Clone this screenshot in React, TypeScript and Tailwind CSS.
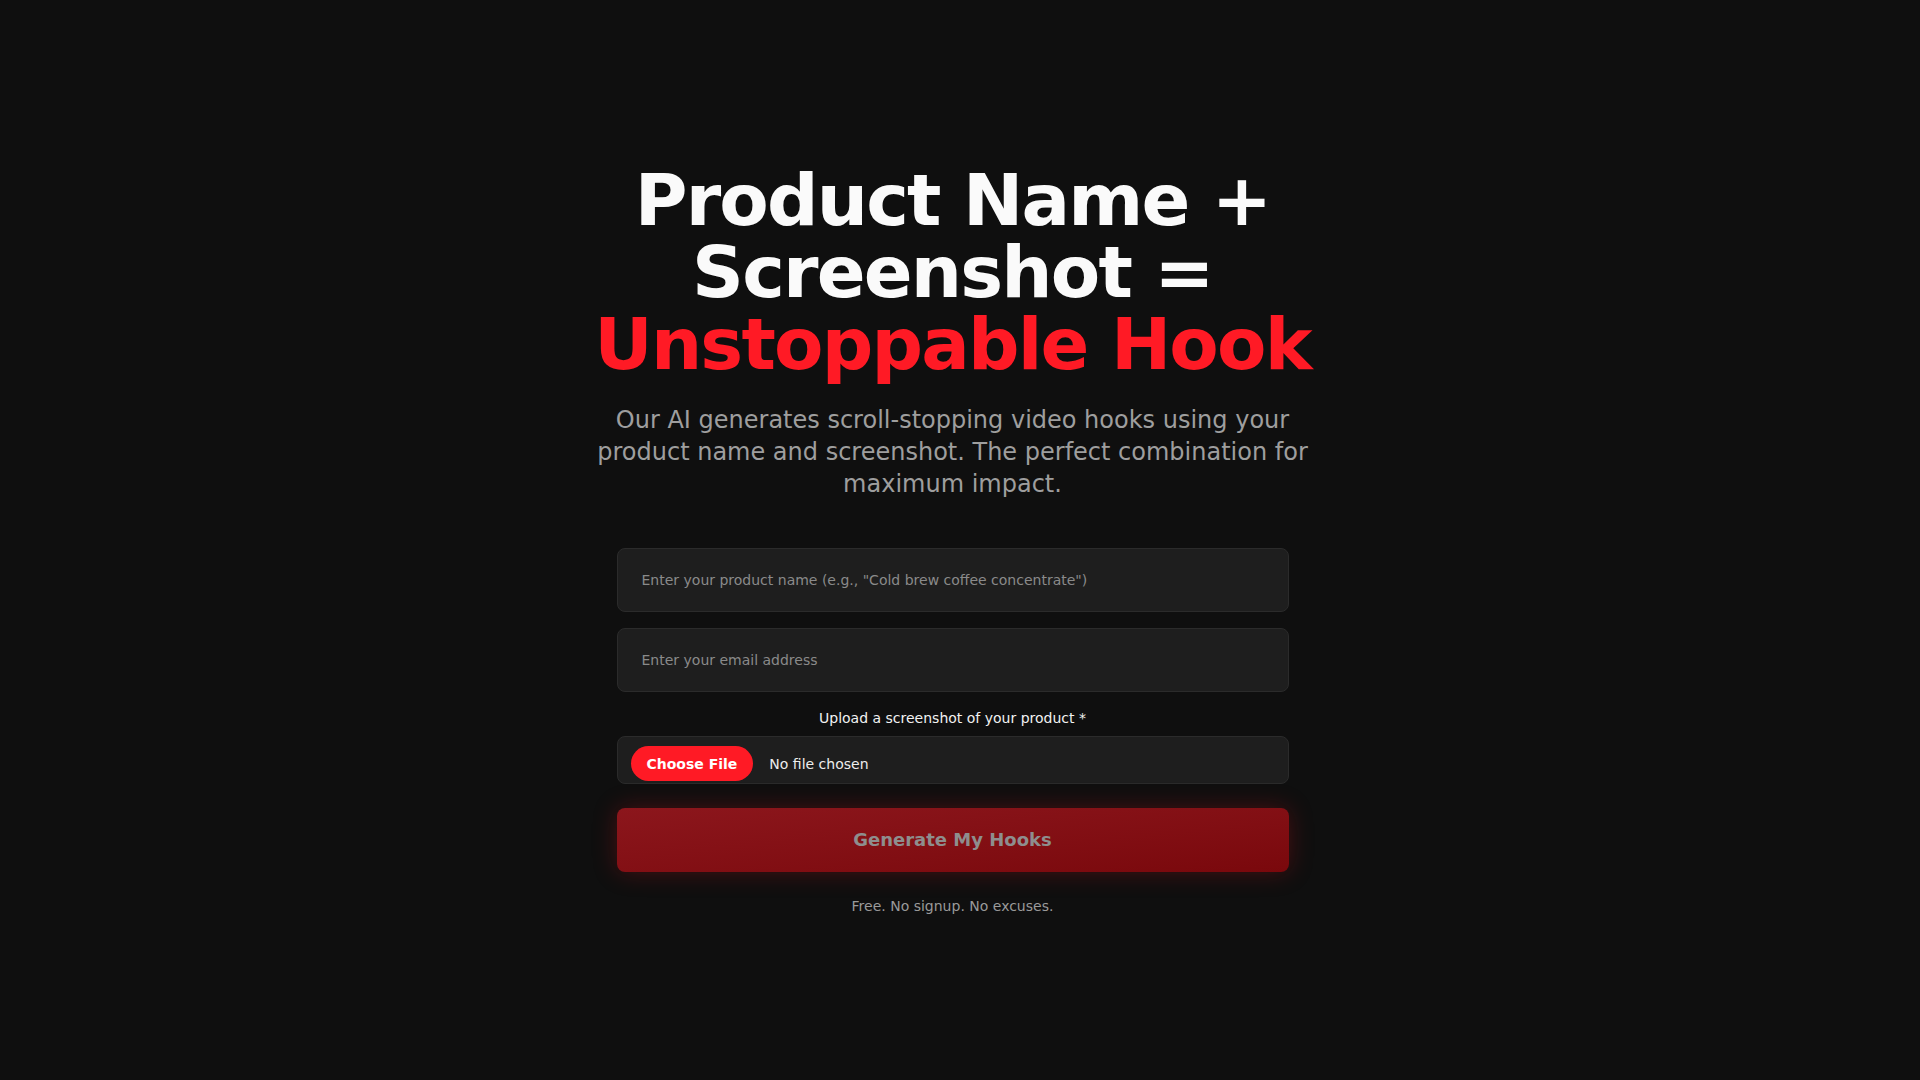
import { useState } from "react";

const App = () => {
  const [productName, setProductName] = useState("");
  const [email, setEmail] = useState("");
  const [fileName, setFileName] = useState("");

  return (
    <div className="min-h-screen w-full bg-[#0f0f0f] text-white font-['DejaVu_Sans',sans-serif]">
      <section className="min-h-screen flex flex-col items-center justify-center pl-4 pr-[31px]">
        <div className="w-full max-w-3xl flex flex-col items-center text-center">
          <h1 className="text-7xl font-bold leading-[72px] tracking-tight text-[#fafafa] mb-6">
            Product Name + Screenshot =
            <br />
            <span className="text-[#ff1a25]">Unstoppable Hook</span>
          </h1>
          <p className="text-2xl leading-8 text-[#9e9e9e] mb-12">
            Our AI generates scroll-stopping video hooks using your product
            name and screenshot. The perfect combination for maximum impact.
          </p>
        </div>

        <form
          className="w-full max-w-2xl flex flex-col"
          onSubmit={(e) => e.preventDefault()}
        >
          <input
            type="text"
            value={productName}
            onChange={(e) => setProductName(e.target.value)}
            placeholder='Enter your product name (e.g., "Cold brew coffee concentrate")'
            className="w-full px-6 py-[21px] text-sm leading-5 bg-[#1e1e1e] border border-[#2b2b2b] rounded-lg text-white placeholder:text-[#8a8a8a] outline-none"
          />
          <input
            type="email"
            value={email}
            onChange={(e) => setEmail(e.target.value)}
            placeholder="Enter your email address"
            className="w-full mt-4 px-6 py-[21px] text-sm leading-5 bg-[#1e1e1e] border border-[#2b2b2b] rounded-lg text-white placeholder:text-[#8a8a8a] outline-none"
          />

          <label className="mt-4 mb-2 text-sm leading-5 text-center text-[#f2f2f2]">
            Upload a screenshot of your product *
          </label>
          <label className="h-12 flex items-start pt-[9px] pl-[13px] bg-[#1e1e1e] border border-[#2b2b2b] rounded-lg cursor-pointer">
            <span className="flex items-center">
              <span className="h-[35px] px-4 flex items-center rounded-full bg-[#ff1a25] text-sm font-bold text-white">
                Choose File
              </span>
              <span className="ml-4 text-sm text-[#ededed]">
                {fileName || "No file chosen"}
              </span>
            </span>
            <input
              type="file"
              accept="image/*"
              className="hidden"
              onChange={(e) => setFileName(e.target.files?.[0]?.name ?? "")}
            />
          </label>

          <button
            type="submit"
            disabled
            className="mt-6 h-16 w-full rounded-lg bg-gradient-to-br from-[#8c161c] to-[#7a080c] text-lg font-bold text-[#8e8e8e] shadow-[0_0_24px_rgba(200,16,24,0.3)]"
          >
            Generate My Hooks
          </button>

          <p className="mt-6 text-sm leading-5 text-center text-[#9a9a9a]">
            Free. No signup. No excuses.
          </p>
        </form>
      </section>

      {/* Below the fold */}
      <section className="h-[2170px]" />
    </div>
  );
};

export default App;
